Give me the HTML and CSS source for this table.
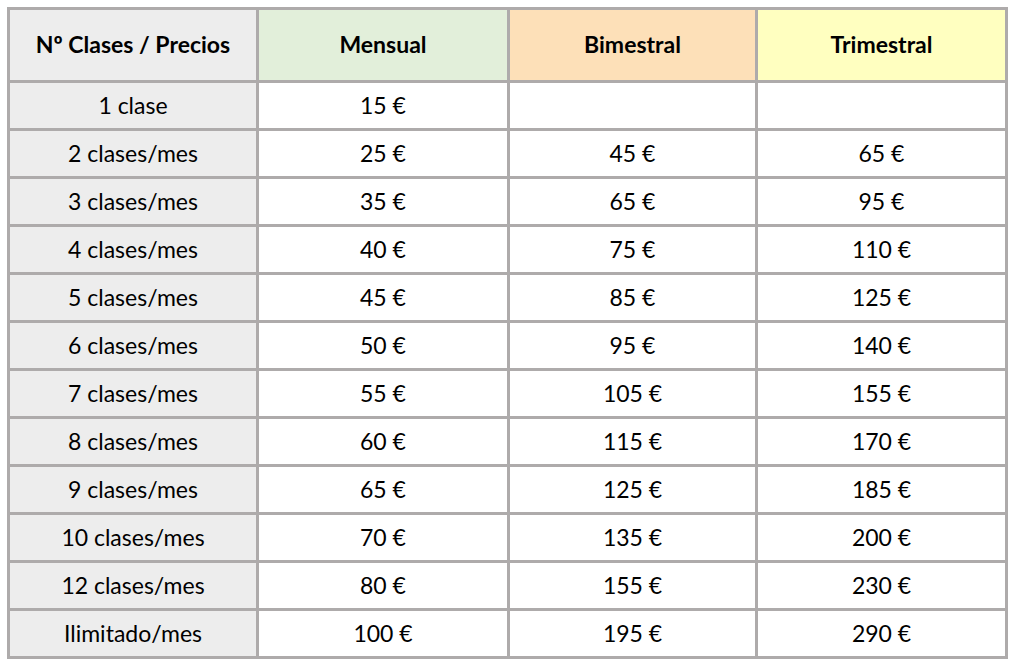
FILE: index.html
```html
<!DOCTYPE html>
<html lang="es">
<head>
<meta charset="utf-8">
<title>Precios</title>
<link rel="stylesheet" href="styles.css">
</head>
<body>
<div class="wrap">
  <div class="grid">
    <div class="cell head first">Nº Clases / Precios</div>
    <div class="cell head mensual">Mensual</div>
    <div class="cell head bimestral">Bimestral</div>
    <div class="cell head trimestral">Trimestral</div>

    <div class="cell first">1 clase</div><div class="cell">15 €</div><div class="cell"></div><div class="cell"></div>
    <div class="cell first">2 clases/mes</div><div class="cell">25 €</div><div class="cell">45 €</div><div class="cell">65 €</div>
    <div class="cell first">3 clases/mes</div><div class="cell">35 €</div><div class="cell">65 €</div><div class="cell">95 €</div>
    <div class="cell first">4 clases/mes</div><div class="cell">40 €</div><div class="cell">75 €</div><div class="cell">110 €</div>
    <div class="cell first">5 clases/mes</div><div class="cell">45 €</div><div class="cell">85 €</div><div class="cell">125 €</div>
    <div class="cell first">6 clases/mes</div><div class="cell">50 €</div><div class="cell">95 €</div><div class="cell">140 €</div>
    <div class="cell first">7 clases/mes</div><div class="cell">55 €</div><div class="cell">105 €</div><div class="cell">155 €</div>
    <div class="cell first">8 clases/mes</div><div class="cell">60 €</div><div class="cell">115 €</div><div class="cell">170 €</div>
    <div class="cell first">9 clases/mes</div><div class="cell">65 €</div><div class="cell">125 €</div><div class="cell">185 €</div>
    <div class="cell first">10 clases/mes</div><div class="cell">70 €</div><div class="cell">135 €</div><div class="cell">200 €</div>
    <div class="cell first">12 clases/mes</div><div class="cell">80 €</div><div class="cell">155 €</div><div class="cell">230 €</div>
    <div class="cell first">Ilimitado/mes</div><div class="cell">100 €</div><div class="cell">195 €</div><div class="cell">290 €</div>
  </div>
</div>
</body>
</html>
```
FILE: styles.css
```css
html, body {
  margin: 0;
  padding: 0;
  background: #ffffff;
}
.wrap {
  padding: 7px;
}
.grid {
  display: grid;
  grid-template-columns: 246px 248px 245px 247px;
  grid-template-rows: 70px repeat(12, 45px);
  gap: 3px;
  padding: 3px;
  width: max-content;
  background: #aeabab;
  font-family: Lato, "Liberation Sans", sans-serif;
  font-size: 23px;
  color: #000000;
}
.cell {
  background: #ffffff;
  display: flex;
  align-items: center;
  justify-content: center;
  padding-bottom: 2px;
}
.first {
  background: #ededed;
}
.head {
  font-weight: bold;
}
.mensual { background: #e2efda; }
.bimestral { background: #fde0b8; }
.trimestral { background: #ffffc0; }
```
